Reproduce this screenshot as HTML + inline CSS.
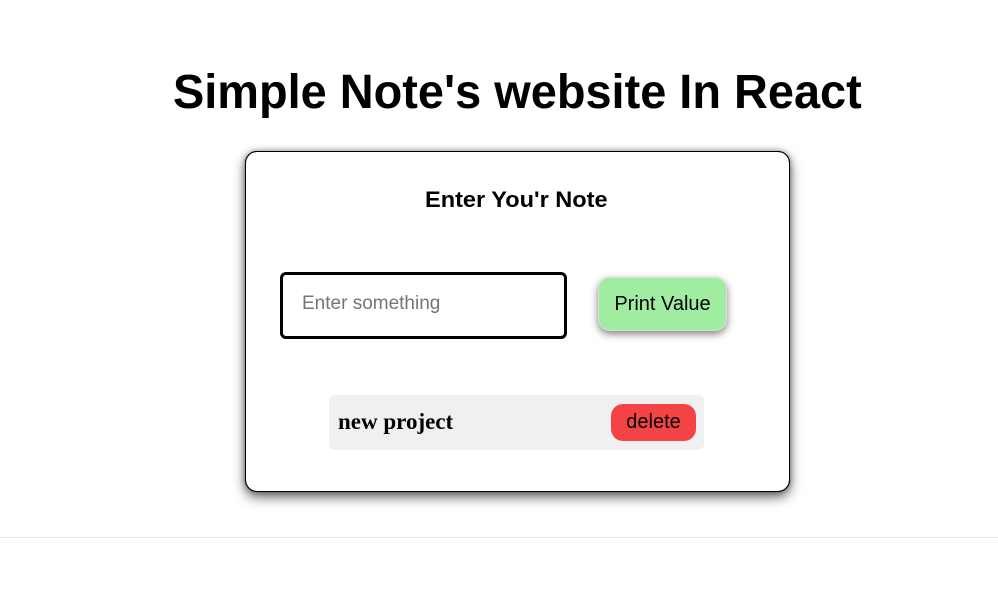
<!DOCTYPE html>
<html><head><style>
body{margin:0;width:998px;height:611px;background:#fff;position:relative;overflow:hidden;font-family:"Liberation Sans",sans-serif}
.a{position:absolute}
h1{position:absolute;left:173px;top:63px;margin:0;font-size:48px;font-weight:bold;white-space:nowrap;transform-origin:0 0;transform:scaleX(0.977);line-height:60px}
.card{left:245px;top:151px;width:543px;height:339px;border:1px solid #000;border-radius:12px;box-shadow:0 5px 12px rgba(0,0,0,.6)}
</style></head><body>
<h1>Simple Note's website In React</h1>
<div class="a card"></div>
<div class="a card" style="box-shadow:0 0 6px rgba(0,0,0,.35)"></div>
<div class="a" style="left:425px;top:187px;font-weight:bold;font-size:22px;transform-origin:0 0;transform:scaleX(1.07);white-space:nowrap">Enter You'r Note</div>
<div class="a" style="left:280px;top:272px;width:281px;height:61px;border:3px solid #000;border-radius:6px"></div>
<div class="a" style="left:302px;top:293px;font-size:19px;color:#757575">Enter something</div>
<div class="a" style="left:598px;top:277px;width:127px;height:52px;background:#a0eca0;border:1px solid #ddd;border-radius:12px;box-shadow:0 3px 8px rgba(0,0,0,.5);text-align:center;line-height:52px;font-size:20px">Print Value</div>
<div class="a" style="left:329px;top:395px;width:375px;height:55px;background:#f0f0f0;border-radius:6px"></div>
<div class="a" style="left:338px;top:409px;font-family:'Liberation Serif',serif;font-weight:bold;font-size:23px">new project</div>
<div class="a" style="left:611px;top:404px;width:85px;height:37px;background:#f44344;border-radius:12px;text-align:center;line-height:36px;font-size:20px">delete</div>
<div class="a" style="left:0;top:537px;width:998px;height:1px;background:#e8e8e8"></div>
</body></html>
